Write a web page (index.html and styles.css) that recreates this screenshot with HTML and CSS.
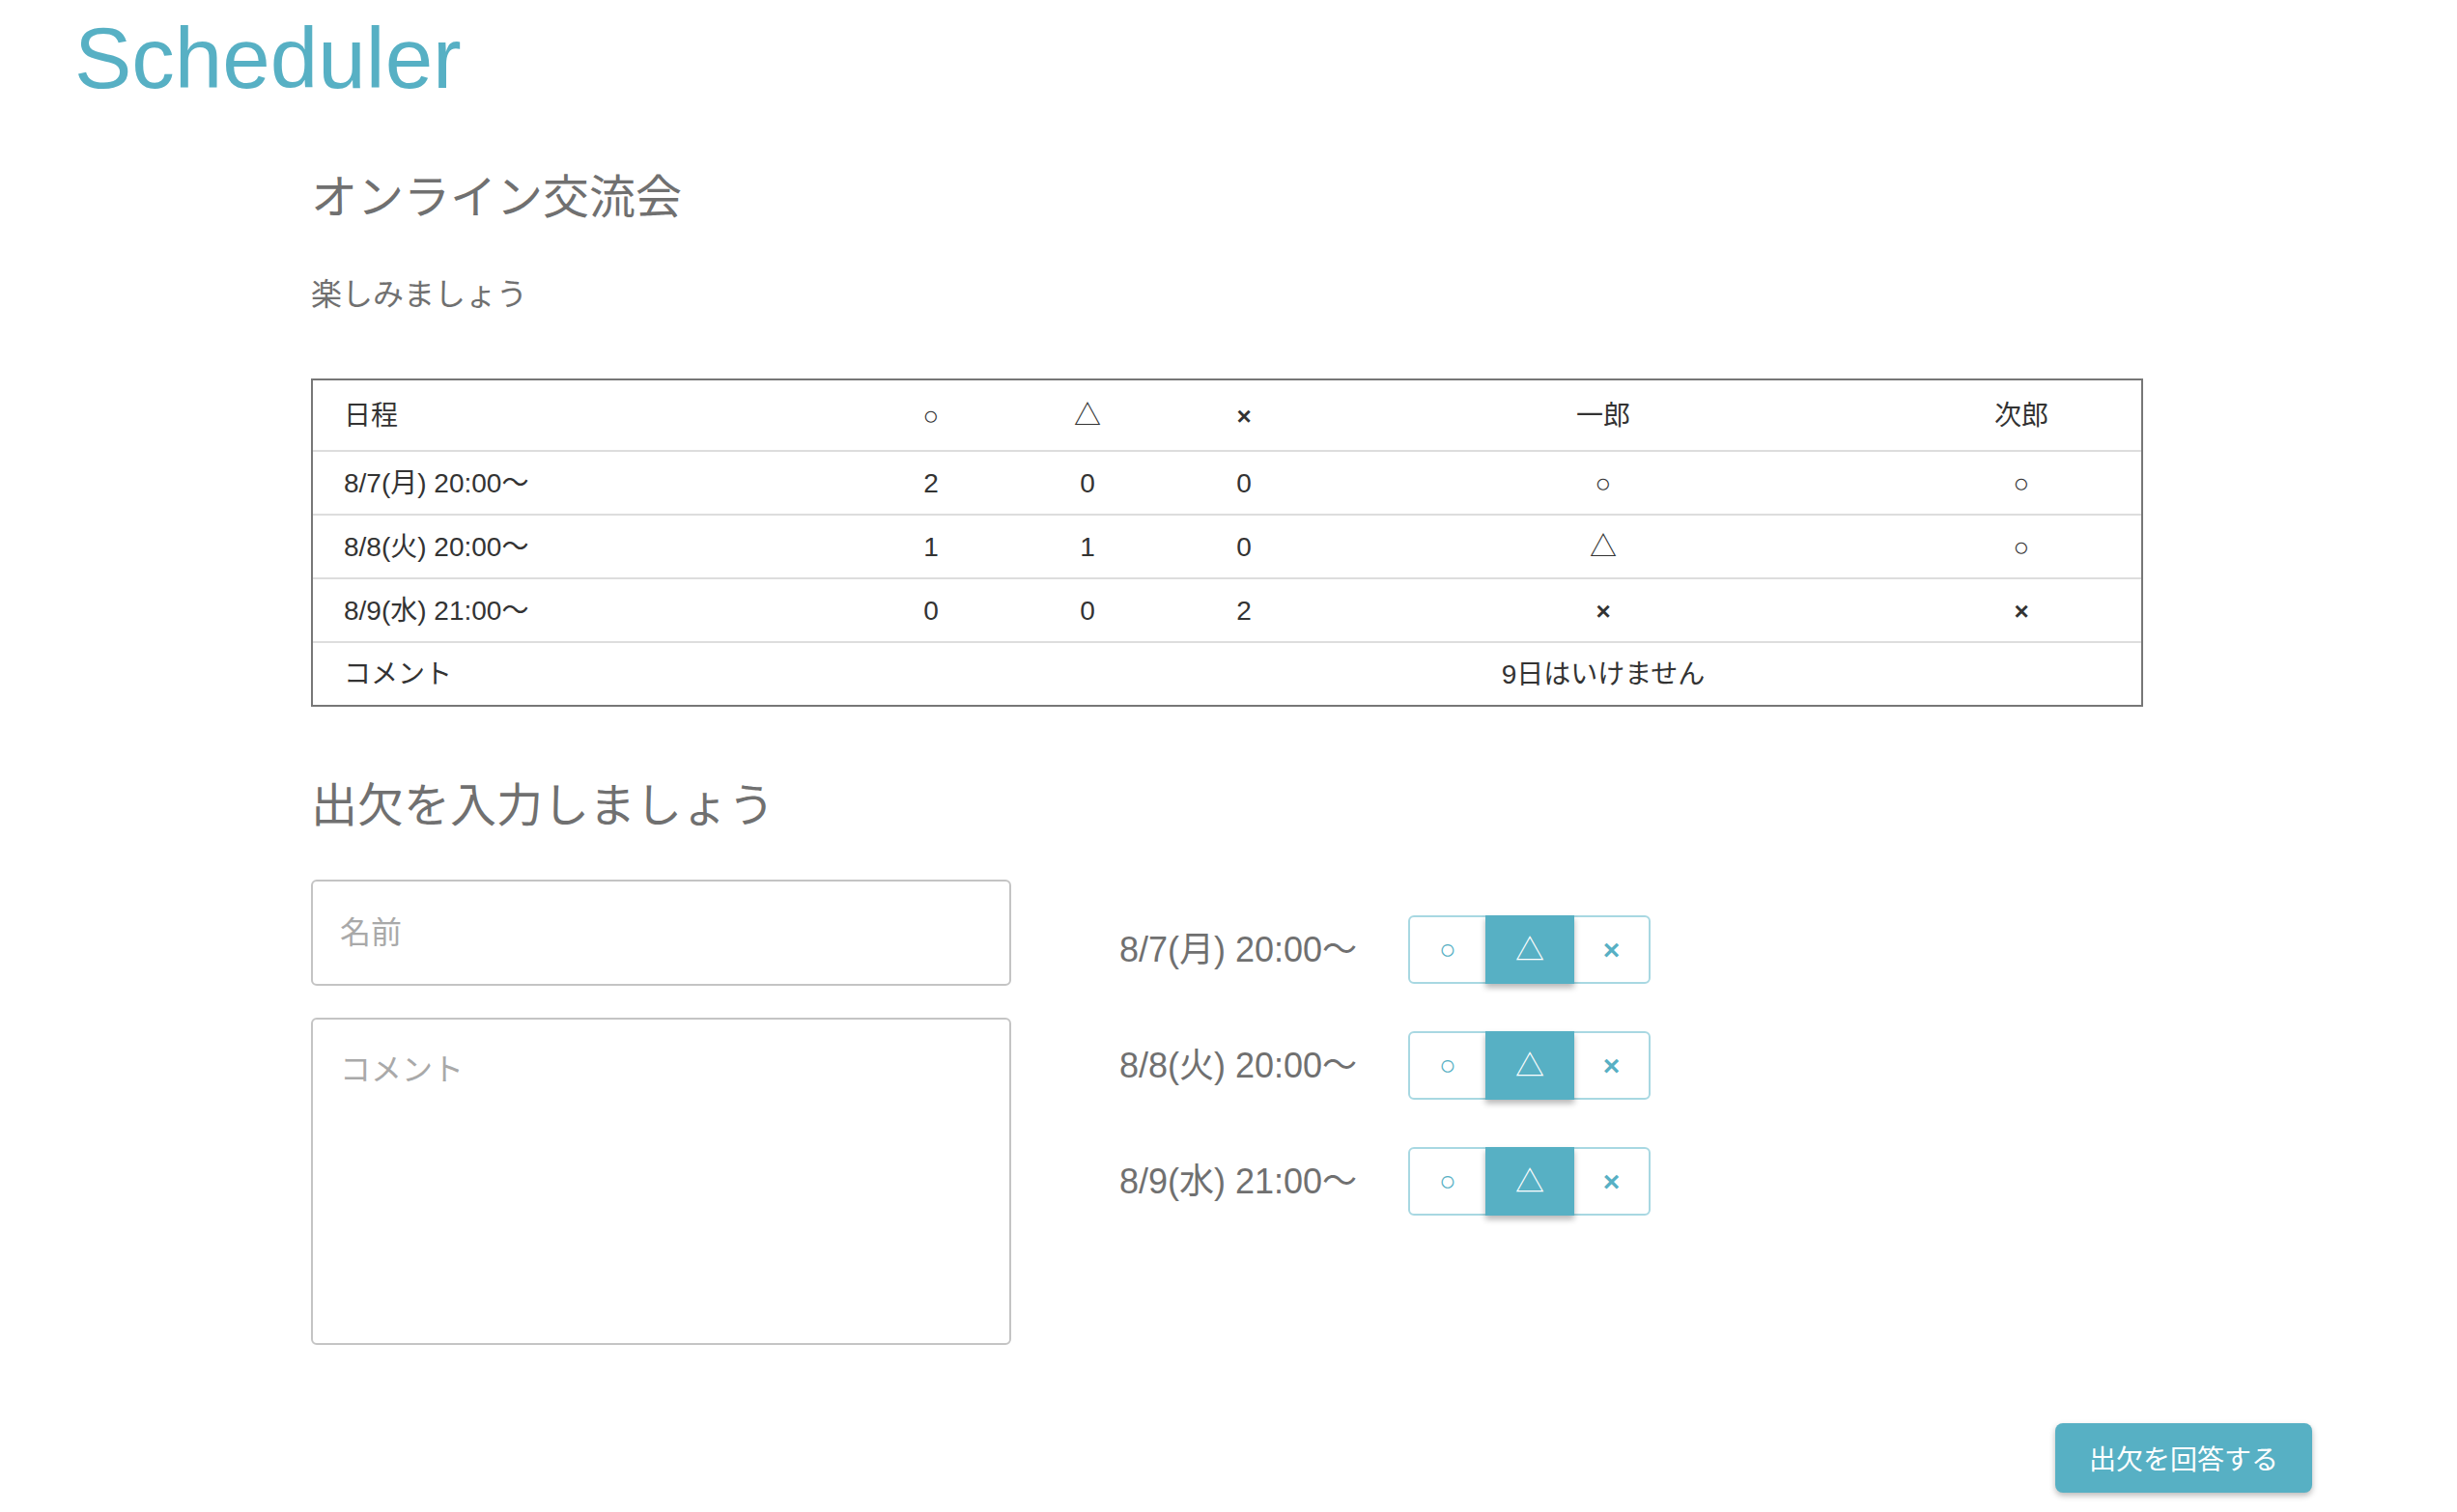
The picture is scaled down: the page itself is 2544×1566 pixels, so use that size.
FILE: index.html
```html
<!DOCTYPE html>
<html lang="ja">
<head>
<meta charset="utf-8">
<title>Scheduler</title>
<link rel="stylesheet" href="styles.css">
</head>
<body>
<header class="site-header">
  <h1 class="logo">Scheduler</h1>
</header>
<main class="content">
  <section class="event">
    <h2 class="section-title event-title">オンライン交流会</h2>
    <p class="event-desc">楽しみましょう</p>
    <table class="schedule">
      <colgroup>
        <col class="c-date"><col class="c-num"><col class="c-num"><col class="c-num"><col class="c-p1"><col class="c-p2">
      </colgroup>
      <thead>
        <tr><th class="date">日程</th><th>○</th><th>△</th><th><span class="mark-ng">×</span></th><th>一郎</th><th class="last">次郎</th></tr>
      </thead>
      <tbody>
        <tr><td class="date">8/7(月) 20:00〜</td><td>2</td><td>0</td><td>0</td><td>○</td><td class="last">○</td></tr>
        <tr><td class="date">8/8(火) 20:00〜</td><td>1</td><td>1</td><td>0</td><td>△</td><td class="last">○</td></tr>
        <tr><td class="date">8/9(水) 21:00〜</td><td>0</td><td>0</td><td>2</td><td><span class="mark-ng">×</span></td><td class="last"><span class="mark-ng">×</span></td></tr>
        <tr><td class="date" colspan="4">コメント</td><td>9日はいけません</td><td class="last"></td></tr>
      </tbody>
    </table>
  </section>

  <section class="entry">
    <h2 class="section-title entry-title">出欠を入力しましょう</h2>
    <div class="entry-body">
      <div class="fields">
        <input class="field field-name" type="text" placeholder="名前">
        <textarea class="field field-comment" placeholder="コメント"></textarea>
      </div>
      <div class="answers">
        <div class="answer-row">
          <span class="answer-date">8/7(月) 20:00〜</span>
          <div class="choice-group">
            <button class="choice choice-ok" type="button">○</button>
            <button class="choice choice-maybe is-active" type="button">△</button>
            <button class="choice choice-ng" type="button">×</button>
          </div>
        </div>
        <div class="answer-row">
          <span class="answer-date">8/8(火) 20:00〜</span>
          <div class="choice-group">
            <button class="choice choice-ok" type="button">○</button>
            <button class="choice choice-maybe is-active" type="button">△</button>
            <button class="choice choice-ng" type="button">×</button>
          </div>
        </div>
        <div class="answer-row">
          <span class="answer-date">8/9(水) 21:00〜</span>
          <div class="choice-group">
            <button class="choice choice-ok" type="button">○</button>
            <button class="choice choice-maybe is-active" type="button">△</button>
            <button class="choice choice-ng" type="button">×</button>
          </div>
        </div>
      </div>
    </div>
  </section>

  <div class="actions">
    <button class="submit" type="button">出欠を回答する</button>
  </div>
</main>
</body>
</html>
```
FILE: styles.css
```css
* {
  box-sizing: border-box;
}

body {
  margin: 0;
  background: #ffffff;
  color: #333333;
  font-family: "Liberation Sans", "Noto Sans CJK JP", sans-serif;
}

.site-header {
  padding: 16px 0 0 77px;
}

.logo {
  margin: 0;
  font-size: 89px;
  line-height: 89px;
  font-weight: 400;
  color: #57b0c4;
}

.content {
  padding: 0 150px 0 322px;
}

.section-title {
  margin: 0;
  font-size: 48px;
  line-height: 48px;
  font-weight: 400;
  color: #707070;
}

.event-title {
  margin-top: 76px;
}

.event-desc {
  margin: 60px 0 0;
  font-size: 32px;
  line-height: 32px;
  color: #707070;
}

/* schedule table */
.schedule {
  margin-top: 71px;
  width: 1897px;
  border: 2px solid #777777;
  border-collapse: separate;
  border-spacing: 0;
  table-layout: fixed;
  font-size: 28px;
  line-height: 28px;
  color: #333333;
}

.c-date { width: 559px; }
.c-num { width: 162px; }
.c-p1 { width: 582px; }
.c-p2 { width: 266px; }

.schedule th,
.schedule td {
  padding: 19px 0 17px;
  border-bottom: 2px solid #dddddd;
  text-align: center;
  font-weight: 400;
  vertical-align: middle;
}

.schedule thead th {
  padding: 23px 0 21px;
}

.schedule .date {
  text-align: left;
  padding-left: 32px;
}

.schedule .last {
  padding-left: 18px;
}

.schedule tbody tr:last-child td {
  border-bottom: 0;
}

.mark-ng {
  font-weight: 700;
  font-size: 26px;
}

/* entry form */
.entry-title {
  margin-top: 79px;
}

.entry-body {
  display: flex;
  margin-top: 52px;
}

.fields {
  width: 725px;
  display: flex;
  flex-direction: column;
  gap: 33px;
}

.field {
  display: block;
  width: 100%;
  margin: 0;
  border: 2px solid #c4c4c4;
  border-radius: 6px;
  background: #ffffff;
  font-family: "Liberation Sans", "Noto Sans CJK JP", sans-serif;
  font-size: 32px;
  color: #333333;
  outline: none;
}

.field::placeholder {
  color: #a9a9a9;
}

.field-name {
  height: 110px;
  padding: 0 28px;
}

.field-comment {
  height: 339px;
  padding: 28px;
  line-height: 48px;
  resize: none;
}

.answers {
  margin-left: 112px;
  padding-top: 37px;
  display: flex;
  flex-direction: column;
  gap: 49px;
}

.answer-row {
  display: flex;
  align-items: center;
  height: 71px;
}

.answer-date {
  width: 299px;
  font-size: 36px;
  line-height: 36px;
  color: #707070;
}

.choice-group {
  display: flex;
  height: 71px;
  border: 2px solid #a8d8e2;
  border-radius: 6px;
}

.choice {
  margin: 0;
  padding: 0;
  border: 0;
  background: transparent;
  font-family: "Liberation Sans", "Noto Sans CJK JP", sans-serif;
  font-size: 29px;
  line-height: 29px;
  color: #57b0c4;
  cursor: pointer;
}

.choice-ok {
  width: 78px;
  border-radius: 4px 0 0 4px;
}

.choice-maybe {
  width: 92px;
  font-size: 30px;
}

.choice-ng {
  width: 77px;
  border-radius: 0 4px 4px 0;
  font-weight: 700;
  font-size: 30px;
}

.choice.is-active {
  height: 71px;
  margin: -2px 0;
  background: #57b0c4;
  color: #ffffff;
  box-shadow: 0 4px 6px rgba(0, 0, 0, 0.28);
  position: relative;
}

.actions {
  display: flex;
  justify-content: flex-end;
  margin-top: 81px;
  padding-bottom: 16px;
}

.submit {
  width: 266px;
  height: 72px;
  margin: 0;
  padding: 0;
  border: 0;
  border-radius: 8px;
  background: #57b0c4;
  color: #ffffff;
  font-family: "Noto Sans CJK JP", sans-serif;
  font-size: 28px;
  line-height: 28px;
  box-shadow: 0 3px 6px rgba(0, 0, 0, 0.28);
  cursor: pointer;
}
```
